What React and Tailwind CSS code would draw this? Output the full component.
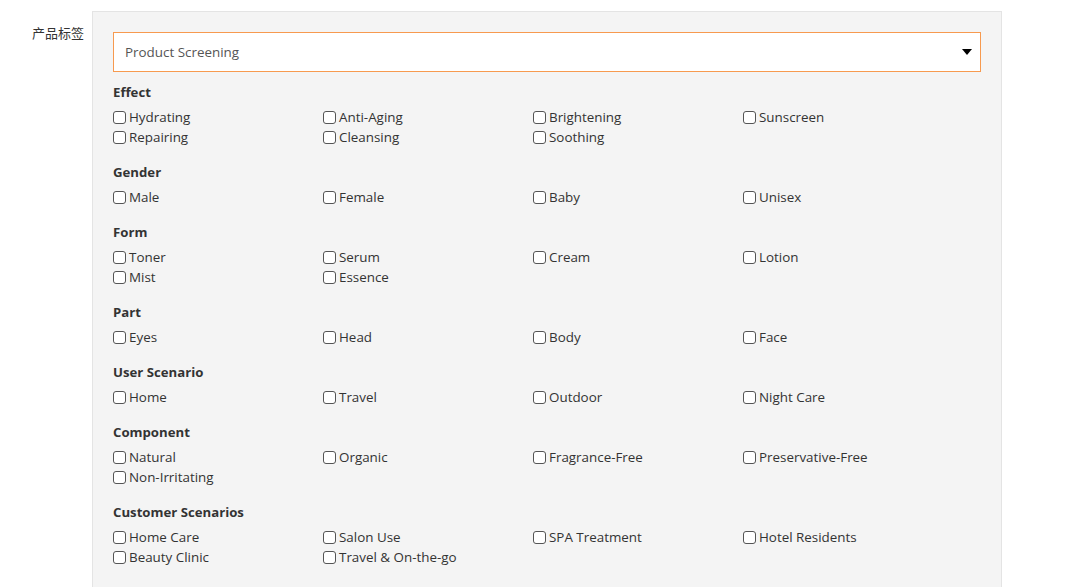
import React from "react";

const groups = [
  { title: "Effect", items: ["Hydrating", "Anti-Aging", "Brightening", "Sunscreen", "Repairing", "Cleansing", "Soothing"] },
  { title: "Gender", items: ["Male", "Female", "Baby", "Unisex"] },
  { title: "Form", items: ["Toner", "Serum", "Cream", "Lotion", "Mist", "Essence"] },
  { title: "Part", items: ["Eyes", "Head", "Body", "Face"] },
  { title: "User Scenario", items: ["Home", "Travel", "Outdoor", "Night Care"] },
  { title: "Component", items: ["Natural", "Organic", "Fragrance-Free", "Preservative-Free", "Non-Irritating"] },
  { title: "Customer Scenarios", items: ["Home Care", "Salon Use", "SPA Treatment", "Hotel Residents", "Beauty Clinic", "Travel & On-the-go"] },
];

function Group({ title, items }) {
  return (
    <div className="mt-[10px] [&+&]:mt-[15px]">
      <div className="h-5 leading-5 font-bold text-[13.2px] text-[#333]">{title}</div>
      <div className="mt-[5px] grid grid-cols-[210px_210px_210px_210px]">
        {items.map((it) => (
          <label key={it} className="flex items-center h-5 text-[13.4px] text-[#333] leading-5">
            <input
              type="checkbox"
              className="appearance-none m-0 mr-[3px] w-[13px] h-[13px] bg-white border border-[#555] rounded-[3px] shrink-0"
            />
            <span>{it}</span>
          </label>
        ))}
      </div>
    </div>
  );
}

export default function App() {
  return (
    <div className="w-[1073px] h-[587px] overflow-hidden bg-white" style={{ fontFamily: '"Open Sans", "Noto Sans CJK SC", sans-serif' }}>
      <div className="flex pt-[11px]">
        <div className="w-[92px] pr-2 pt-[12px] text-right text-[13px] leading-5 text-[#333]">产品标签</div>
        <div className="w-[910px] bg-[#f4f4f4] border border-[#e4e4e4] px-5 pt-5 pb-10">
          <div className="h-10 bg-white border border-[#f79a4f] flex items-center justify-between pl-[11px] pr-[8px]">
            <span className="text-[13.4px] text-[#555]">Product Screening</span>
            <svg width="10" height="6" viewBox="0 0 10 6"><path d="M0 0h10L5 6z" fill="#000" /></svg>
          </div>
          {groups.map((g) => (
            <Group key={g.title} {...g} />
          ))}
        </div>
      </div>
    </div>
  );
}
